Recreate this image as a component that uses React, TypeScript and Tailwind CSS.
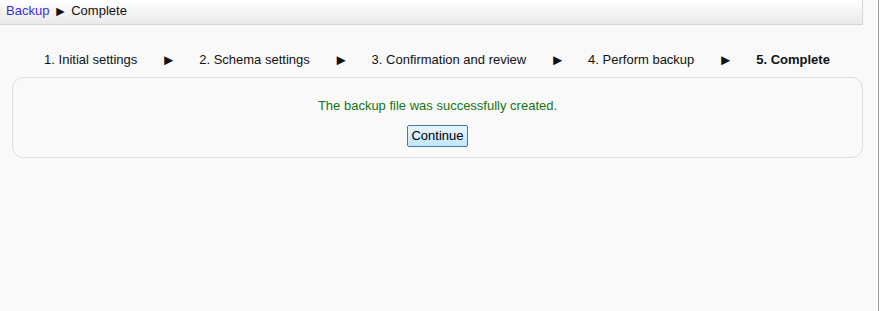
import React from 'react'

const steps = [
  '1. Initial settings',
  '2. Schema settings',
  '3. Confirmation and review',
  '4. Perform backup',
]

export default function App() {
  return (
    <div className="flex h-[311px] w-[881px] bg-white text-[13px] text-[#111]" style={{ fontFamily: '"Liberation Sans", Arial, sans-serif' }}>
      <div className="h-full w-[879px] border-r border-[#9a9a9a] bg-[#f9f9f9]">
        {/* breadcrumb bar */}
        <div className="flex h-[25px] w-[863px] items-center border-b border-r border-[#d6d6d6] bg-gradient-to-b from-white to-[#e9e9e9] pb-[2px] pl-[6px]">
          <a className="text-[#3a2ee0]">Backup</a>
          <span className="mx-[4px] text-[14px] leading-[15px]">►</span>
          <span>Complete</span>
        </div>

        {/* steps */}
        <div className="mt-[25px] flex h-[19px] w-[874px] items-center justify-center">
          {steps.map((s) => (
            <React.Fragment key={s}>
              <span>{s}</span>
              <span className="ml-[24px] mr-[23px] text-[15px] leading-[15px]">►</span>
            </React.Fragment>
          ))}
          <span className="font-bold">5. Complete</span>
        </div>

        <div className="ml-[12px] mt-[8px] flex h-[81px] w-[851px] flex-col items-center rounded-[11px] border border-[#dcdcdc] pt-[18px]">
          <div className="text-[#127512]">The backup file was successfully created.</div>
          <button className="mt-[9px] h-[22px] rounded-[2px] border border-[#3d7bad] bg-gradient-to-b from-[#eaf6fd] to-[#bee6fd] px-[3px] text-[13px] leading-[18px] text-black">
            Continue
          </button>
        </div>
      </div>
    </div>
  )
}
